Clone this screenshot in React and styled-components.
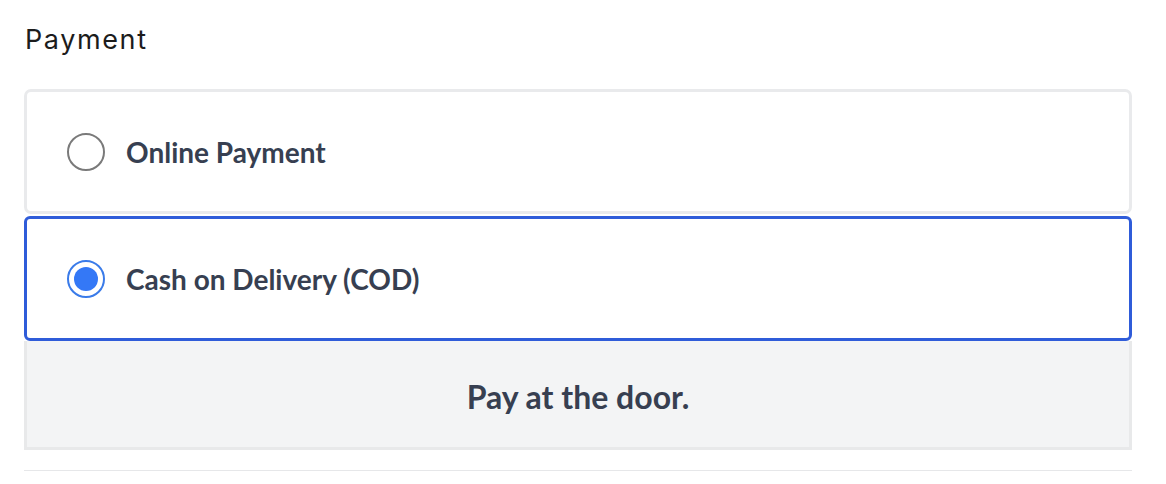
import React, { useState } from 'react';
import styled, { createGlobalStyle } from 'styled-components';

const GlobalStyle = createGlobalStyle`
  body {
    margin: 0;
    background: #ffffff;
    font-family: Lato, "Open Sans", sans-serif;
  }
`;

const Section = styled.section`
  width: 1108px;
  margin-left: 24px;
  padding-top: 22px;
`;

const Title = styled.h2`
  margin: 0 0 31px 1px;
  font-family: Inter, "Open Sans", sans-serif;
  font-weight: 400;
  font-size: 27px;
  line-height: 36px;
  color: #1c1c1c;
  letter-spacing: 1.6px;
`;

const Options = styled.div`
  display: flex;
  flex-direction: column;
  gap: 2px;
`;

const Option = styled.label`
  display: flex;
  align-items: center;
  gap: 21px;
  height: 125px;
  box-sizing: border-box;
  padding: 0 40px;
  border: 3px solid ${(p) => (p.$active ? '#2f5cd9' : '#e9eaec')};
  border-radius: ${(p) => (p.$active ? '6px' : '7px')};
  background: #fff;
  cursor: pointer;
`;

const Radio = styled.span`
  width: 38px;
  height: 38px;
  box-sizing: border-box;
  border-radius: 50%;
  border: 2px solid ${(p) => (p.$checked ? '#3a7be9' : '#7a7a7a')};
  display: flex;
  align-items: center;
  justify-content: center;
  flex-shrink: 0;

  &::after {
    content: '';
    display: ${(p) => (p.$checked ? 'block' : 'none')};
    width: 24px;
    height: 24px;
    border-radius: 50%;
    background: #3478f6;
  }
`;

const OptionText = styled.span`
  font-family: Lato, sans-serif;
  font-weight: 700;
  font-size: 28px;
  color: #373f51;
`;

const Note = styled.div`
  height: 109px;
  box-sizing: border-box;
  background: #f3f4f5;
  border: 3px solid #e8e9ea;
  border-top: none;
  display: flex;
  align-items: center;
  justify-content: center;
  padding-top: 4px;
  font-family: Lato, sans-serif;
  font-weight: 700;
  font-size: 32px;
  color: #373f51;
`;

const Divider = styled.hr`
  margin: 20px 0 0 0;
  border: none;
  border-top: 1px solid #e6e7e9;
`;

const methods = [
  { id: 'online', label: 'Online Payment' },
  { id: 'cod', label: 'Cash on Delivery (COD)', note: 'Pay at the door.' },
];

export default function App() {
  const [selected, setSelected] = useState('cod');
  return (
    <>
      <GlobalStyle />
      <Section>
        <Title>Payment</Title>
        <Options>
          {methods.map((m) => (
            <div key={m.id}>
              <Option $active={selected === m.id} onClick={() => setSelected(m.id)}>
                <Radio $checked={selected === m.id} />
                <OptionText>{m.label}</OptionText>
              </Option>
              {selected === m.id && m.note && <Note>{m.note}</Note>}
            </div>
          ))}
        </Options>
        <Divider />
      </Section>
    </>
  );
}
